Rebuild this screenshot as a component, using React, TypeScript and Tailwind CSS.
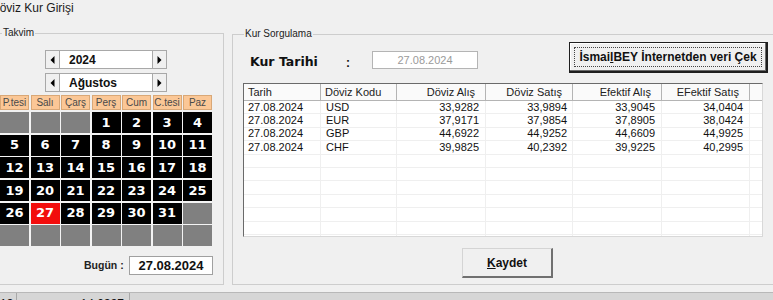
import React from "react";

const LeftTri = () => (
  <svg width="5" height="8" viewBox="0 0 5 8"><path d="M4.5 0 L0.5 4 L4.5 8Z" fill="#000" /></svg>
);
const RightTri = () => (
  <svg width="5" height="8" viewBox="0 0 5 8"><path d="M0.5 0 L4.5 4 L0.5 8Z" fill="#000" /></svg>
);

function NavRow({ value }: { value: string }) {
  return (
    <div className="flex h-[19px] ml-[46px]">
      <div className="w-[15px] h-full border border-[#a8a8a8] bg-[#f0f0f0] flex items-center justify-center">
        <LeftTri />
      </div>
      <div className="w-[92px] h-full border-y border-[#a8a8a8] bg-white pl-[9px] flex items-center font-['Liberation_Sans',Arial,sans-serif] font-bold text-[12px] text-[#111]">
        {value}
      </div>
      <div className="w-[15px] h-full border border-[#a8a8a8] bg-[#f0f0f0] flex items-center justify-center">
        <RightTri />
      </div>
    </div>
  );
}

const headers = ["P.tesi", "Salı", "Çarş", "Perş", "Cum", "C.tesi", "Paz"];

const cells: (number | null)[] = [];
for (let i = 0; i < 3; i++) cells.push(null);
for (let d = 1; d <= 31; d++) cells.push(d);
while (cells.length < 42) cells.push(null);

const cols = [
  { label: "Tarih", w: 77, align: "left" },
  { label: "Döviz Kodu", w: 76, align: "left" },
  { label: "Döviz Alış", w: 89, align: "right" },
  { label: "Döviz Satış", w: 87, align: "right" },
  { label: "Efektif Alış", w: 89, align: "right" },
  { label: "EFektif Satış", w: 88, align: "right" },
];

const rows = [
  ["27.08.2024", "USD", "33,9282", "33,9894", "33,9045", "34,0404"],
  ["27.08.2024", "EUR", "37,9171", "37,9854", "37,8905", "38,0424"],
  ["27.08.2024", "GBP", "44,6922", "44,9252", "44,6609", "44,9925"],
  ["27.08.2024", "CHF", "39,9825", "40,2392", "39,9225", "40,2995"],
];

export default function App() {
  const allRows: string[][] = [...rows];
  while (allRows.length < 11) allRows.push(["", "", "", "", "", ""]);
  return (
    <div className="w-[773px] h-[300px] bg-[#f0f0f0] overflow-hidden font-['Liberation_Sans',Arial,sans-serif] text-[#111]">
      {/* title */}
      <div className="h-[33px]">
        <div className="ml-[-9px] text-[12px] leading-[16px] text-[#1a1a1a]">Döviz Kur Girişi</div>
      </div>

      <div className="flex">
        {/* Takvim group */}
        <div className="relative ml-[-2px] w-[226px] h-[252px] border border-[#cdcdcd] shrink-0">
          <div className="absolute top-[-8px] left-[3px] px-[1px] bg-[#f0f0f0] text-[10px] leading-[14px] text-[#222]">Takvim</div>
          <div className="flex flex-col pt-[16px]">
            <NavRow value="2024" />
            <div className="mt-[4px]">
              <NavRow value="Ağustos" />
            </div>
            <div className="mt-[3px] ml-[1px] grid grid-cols-[repeat(7,29px)] gap-x-[1.5px] h-[15px]">
              {headers.map((h) => (
                <div key={h} className="bg-[#fbc796] border border-[#d9a877] flex items-center justify-center text-[10px] leading-[12px] text-[#4a4a4a]">
                  {h}
                </div>
              ))}
            </div>
            <div className="mt-[2px] ml-[1px] w-[212px] grid grid-cols-[repeat(7,29px)] auto-rows-[21px] gap-x-[1.5px] gap-y-[1.7px] bg-[#f4f4f4]">
              {cells.map((d, i) => (
                <div
                  key={i}
                  className={
                    d === null
                      ? "bg-[#808080]"
                      : d === 27
                      ? "bg-[#f20d0d] flex items-center justify-center text-white font-['DejaVu_Sans',sans-serif] font-bold text-[13px] leading-[16px]"
                      : "bg-black flex items-center justify-center text-white font-['DejaVu_Sans',sans-serif] font-bold text-[13px] leading-[16px]"
                  }
                >
                  {d ?? ""}
                </div>
              ))}
            </div>
            <div className="mt-[10px] flex items-center">
              <div className="ml-[85px] w-[38px] text-[10.5px] font-bold text-[#222] whitespace-nowrap">Bugün :</div>
              <div className="ml-[7px] w-[84px] h-[19px] bg-white border border-[#a0a0a0] flex items-center justify-center font-bold text-[13px] text-[#111]">
                27.08.2024
              </div>
            </div>
          </div>
        </div>

        {/* Kur Sorgulama group */}
        <div className="relative ml-[8px] mt-[1px] w-[545px] h-[251px] border border-[#cdcdcd] shrink-0">
          <div className="absolute top-[-8px] left-[11px] px-[1px] bg-[#f0f0f0] text-[10px] leading-[14px] text-[#222]">Kur Sorgulama</div>
          <div className="flex flex-col pt-[7px]">
            <div className="flex h-[31px]">
              <div className="ml-[17px] w-[96px] mt-[18px] leading-[16px] -translate-y-1/2 font-['DejaVu_Sans',sans-serif] font-bold text-[12.5px] text-[#111] whitespace-nowrap">
                Kur Tarihi
              </div>
              <div className="w-[26px] mt-[19px] leading-[16px] -translate-y-1/2 font-bold text-[12px]">:</div>
              <div className="w-[106px] h-[18px] mt-[9px] bg-white border border-[#b4b4b4] flex items-center justify-center text-[11px] text-[#9a9a9a]">
                27.08.2024
              </div>
              <div className="relative ml-[91px] w-[199px] h-[31px] bg-[#f0f0f0] border border-[#1e1e1e] border-r-2 border-b-2 shadow-[inset_-1px_-1px_0_#6a6a6a,inset_1px_1px_0_#fff] flex items-center justify-center">
                <div className="absolute inset-[4px] border border-dotted border-[#444]" />
                <span className="font-bold text-[12px] text-[#111] whitespace-nowrap">
                  İsmai<span className="underline">l</span>BEY İnternetden veri Çek
                </span>
              </div>
            </div>

            {/* table */}
            <div className="mt-[10px] ml-[10px] w-[520px] h-[154px] bg-white border-l border-t border-[#6a6a6a] border-r border-b border-r-[#d8d8d8] border-b-[#d8d8d8] overflow-hidden">
              <div className="flex h-[17px]">
                {cols.map((c) => (
                  <div
                    key={c.label}
                    style={{ width: c.w }}
                    className={
                      "shrink-0 h-full bg-[#fafafa] border-r border-b border-[#b4b4b4] flex items-center text-[11px] text-[#222] whitespace-nowrap " +
                      (c.align === "left" ? "pl-[4px]" : "justify-end pr-[10px]")
                    }
                  >
                    {c.label}
                  </div>
                ))}
                <div className="flex-1 h-full bg-[#fafafa] border-b border-[#b4b4b4]" />
              </div>
              {allRows.map((r, ri) => (
                <div key={ri} className="flex h-[13.4px] border-b border-[#efefef]">
                  {cols.map((c, ci) => (
                    <div
                      key={ci}
                      style={{ width: c.w }}
                      className={
                        "shrink-0 h-full border-r border-[#efefef] flex items-center text-[11px] leading-[13px] text-[#111] whitespace-nowrap " +
                        (c.align === "left" ? (ci === 0 ? "pl-[4px]" : "pl-[5px]") : ci === 3 ? "justify-end pr-[5px]" : "justify-end pr-[6px]")
                      }
                    >
                      {r[ci]}
                    </div>
                  ))}
                  <div className="flex-1" />
                </div>
              ))}
            </div>

            <div className="mt-[11px] ml-[229px] w-[91px] h-[30px] bg-[#f0f0f0] border border-[#d4d4d4] border-r-2 border-b-2 border-r-[#707070] border-b-[#707070] flex items-center justify-center font-bold text-[12px] text-[#111]">
              <span><span className="underline">K</span>aydet</span>
            </div>
          </div>
        </div>
      </div>

      {/* status bar */}
      <div className="mt-[7px] h-[20px] bg-[#d6d6d6] border-t border-[#b8b8b8] flex text-[12px] leading-[16px] text-[#111]">
        <div className="w-[17px] border-r border-[#a8a8a8] pt-[3px] overflow-hidden whitespace-nowrap">13</div>
        <div className="w-[113px] border-r border-[#a8a8a8] pt-[3px] pr-[5px] text-right whitespace-nowrap">14.0337</div>
      </div>
    </div>
  );
}
